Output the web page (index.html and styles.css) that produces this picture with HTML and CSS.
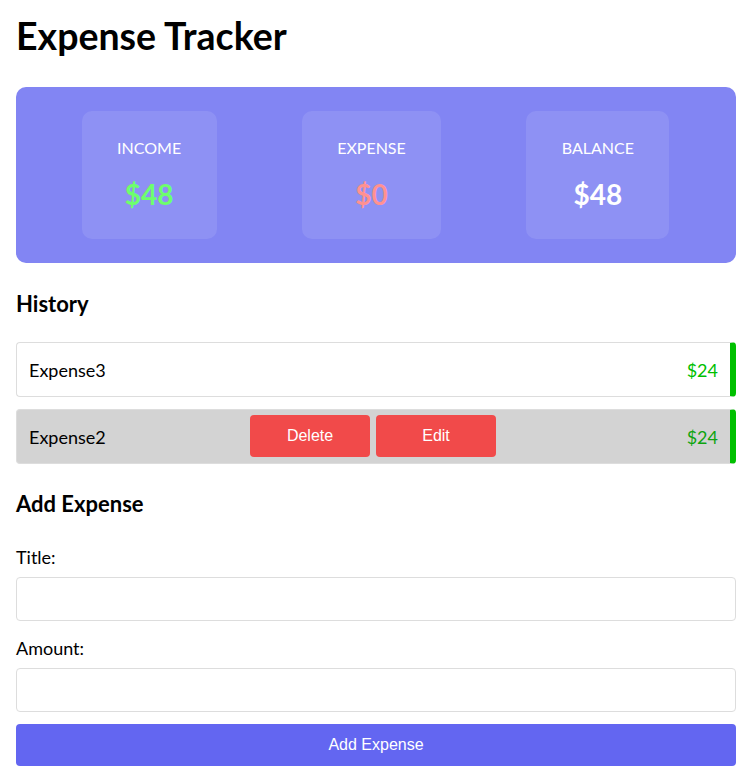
FILE: index.html
```html
<!DOCTYPE html>
<html lang="en">
<head>
<meta charset="utf-8">
<title>Expense Tracker</title>
<link rel="stylesheet" href="styles.css">
</head>
<body>
<div class="app">
  <h1 class="title">Expense Tracker</h1>

  <div class="summary">
    <div class="card">
      <div class="card-label">INCOME</div>
      <div class="card-value income">$48</div>
    </div>
    <div class="card">
      <div class="card-label">EXPENSE</div>
      <div class="card-value expense">$0</div>
    </div>
    <div class="card">
      <div class="card-label">BALANCE</div>
      <div class="card-value">$48</div>
    </div>
  </div>

  <h2 class="section-title">History</h2>
  <ul class="history">
    <li class="item">
      <span class="item-name">Expense3</span>
      <span class="item-amount">$24</span>
    </li>
    <li class="item item-hover">
      <span class="item-name">Expense2</span>
      <div class="item-actions">
        <button class="btn-action">Delete</button>
        <button class="btn-action">Edit</button>
      </div>
      <span class="item-amount">$24</span>
    </li>
  </ul>

  <h2 class="section-title add-title">Add Expense</h2>
  <form class="form">
    <label class="field-label" for="title">Title:</label>
    <input class="field-input" id="title" type="text">
    <label class="field-label" for="amount">Amount:</label>
    <input class="field-input" id="amount" type="text">
    <button class="btn-submit" type="button">Add Expense</button>
  </form>
</div>
</body>
</html>
```

FILE: styles.css
```css
* { box-sizing: border-box; }

body {
  margin: 0;
  padding: 0 12px 0 16px;
  font-family: "Lato", "Open Sans", sans-serif;
  color: #000;
  background: #fff;
}

.app {
  display: flex;
  flex-direction: column;
}

.title {
  margin: 14px 0 0;
  font-size: 37.5px;
  font-weight: 700;
  line-height: 44px;
}

.summary {
  margin-top: 29px;
  background: #8285f3;
  border-radius: 10px;
  padding: 24px;
  display: flex;
  justify-content: space-around;
  height: 176px;
}

.card {
  background: rgba(255, 255, 255, 0.1);
  border-radius: 10px;
  padding: 26px 0 0;
  display: flex;
  flex-direction: column;
  align-items: center;
  color: #fff;
}
.card:nth-child(1) { width: 135px; margin-left: -1px; }
.card:nth-child(2) { width: 139px; }
.card:nth-child(3) { width: 143px; }

.card-label {
  font-size: 16px;
  line-height: 22px;
  font-weight: 400;
}

.card-value {
  margin-top: 16px;
  font-size: 28px;
  line-height: 38px;
  font-weight: 700;
}
.card-value.income { color: #6dff6d; }
.card-value.expense { color: #ff9191; }

.section-title {
  margin: 27px 0 0;
  font-size: 22px;
  line-height: 28px;
  font-weight: 700;
}

.history {
  list-style: none;
  margin: 24px 0 0;
  padding: 0;
  display: flex;
  flex-direction: column;
  gap: 12px;
}

.item {
  position: relative;
  height: 55px;
  display: flex;
  align-items: center;
  justify-content: space-between;
  padding: 0 12px;
  border: 1px solid #dddddd;
  border-right: 6px solid #00c000;
  border-radius: 4px;
  background: #fff;
  font-size: 18px;
}
.item-hover { background: #d3d3d3; }

.item-amount { color: #00c000; }
.item-hover .item-amount { color: #0fa40f; }

.item-actions {
  position: absolute;
  left: 233px;
  top: 5px;
  display: flex;
  gap: 6px;
}

.btn-action {
  width: 120px;
  height: 42px;
  border: none;
  border-radius: 4px;
  background: #f14a4a;
  color: #fff;
  font-family: "Liberation Sans", Arial, sans-serif;
  font-size: 16px;
  cursor: pointer;
}

.add-title { margin-top: 26px; }

.form {
  display: flex;
  flex-direction: column;
  margin-top: 27px;
}

.field-label {
  font-size: 18px;
  line-height: 24px;
}

.field-input {
  margin-top: 8px;
  height: 44px;
  border: 1px solid #dddddd;
  border-radius: 4px;
  font-size: 16px;
  padding: 0 10px;
}
.field-input + .field-label { margin-top: 15px; }

.btn-submit {
  margin-top: 12px;
  height: 42px;
  border: none;
  border-radius: 4px;
  background: #6366f1;
  color: #fff;
  font-family: "Liberation Sans", Arial, sans-serif;
  font-size: 16px;
  cursor: pointer;
}
```
